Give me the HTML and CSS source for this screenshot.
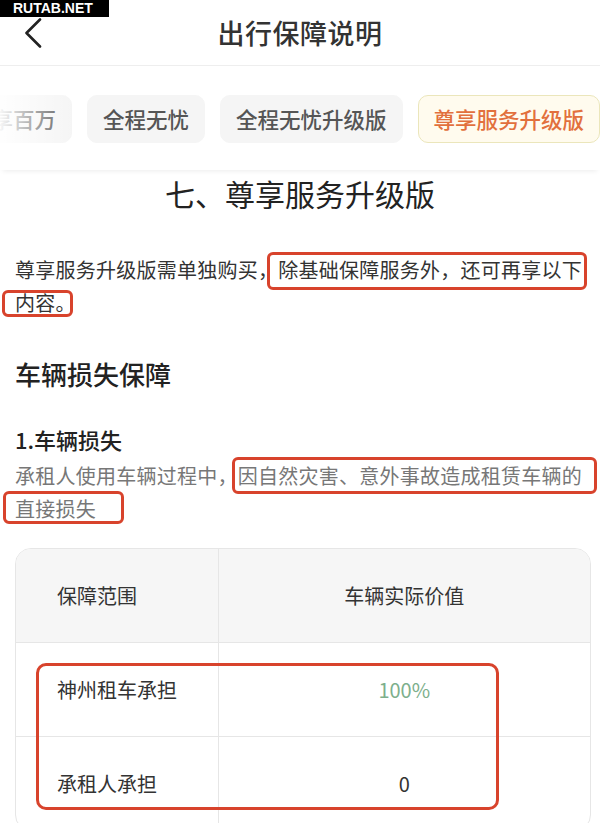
FILE: index.html
```html
<!DOCTYPE html>
<html lang="zh-CN">
<head>
<meta charset="utf-8">
<title>出行保障说明</title>
<link rel="stylesheet" href="styles.css">
</head>
<body>
<div class="watermark">RUTAB.NET</div>
<header class="topbar">
  <div class="back">
    <svg width="20" height="30" viewBox="0 0 20 30"><path d="M18 1.5 L4.5 15 L18 28.5" fill="none" stroke="#222" stroke-width="2.6" stroke-linecap="round" stroke-linejoin="round"/></svg>
  </div>
  <h1 class="title">出行保障说明</h1>
  <div></div>
</header>
<nav class="tabbar">
  <div class="tabs">
    <span class="tab">尊享百万</span>
    <span class="tab">全程无忧</span>
    <span class="tab">全程无忧升级版</span>
    <span class="tab active">尊享服务升级版</span>
  </div>
  <div class="fade"></div>
</nav>
<main class="content">
  <h2 class="section-title">七、尊享服务升级版</h2>
  <p class="intro">尊享服务升级版需单独购买，<span class="mark m1">除基础保障服务外，还可再享以下</span><span class="mark m2">内容。</span></p>
  <h3 class="group-title">车辆损失保障</h3>
  <h4 class="item-title">1.车辆损失</h4>
  <p class="desc">承租人使用车辆过程中，<span class="mark m3">因自然灾害、意外事故造成租赁车辆的</span><span class="mark m4">直接损失</span></p>
  <div class="table-wrap">
    <table class="cover">
      <thead>
        <tr><th class="c1">保障范围</th><th class="c2">车辆实际价值</th></tr>
      </thead>
      <tbody>
        <tr><td class="c1">神州租车承担</td><td class="c2 green">100%</td></tr>
        <tr><td class="c1">承租人承担</td><td class="c2">0</td></tr>
      </tbody>
    </table>
    <div class="table-mark"></div>
  </div>
</main>
</body>
</html>
```
FILE: styles.css
```css
* { box-sizing: border-box; }
html, body { margin: 0; padding: 0; background: #fff; }
body {
  font-family: "Noto Sans CJK SC", "Noto Sans", sans-serif;
  color: #333;
  width: 600px;
  overflow: hidden;
}
.watermark {
  position: absolute;
  left: 0; top: 0;
  width: 109px; height: 17px;
  background: #000;
  color: #fff;
  font-family: "Liberation Sans", Arial, sans-serif;
  font-weight: 700;
  font-size: 14px;
  line-height: 17px;
  padding-left: 13px;
  z-index: 5;
}
.topbar {
  height: 66px;
  border-bottom: 1px solid #eeeeee;
  display: grid;
  grid-template-columns: 1fr auto 1fr;
  align-items: center;
}
.back { padding-left: 22px; display: flex; align-items: center; }
.back svg { display: block; }
.title {
  margin: 0;
  font-size: 27px;
  font-weight: 500;
  color: #333;
  line-height: 36px;
  letter-spacing: 0.5px;
}
.tabbar {
  position: relative;
  height: 104px;
  padding-top: 29px;
  overflow: hidden;
  box-shadow: 0 4px 5px -3px rgba(0,0,0,0.08);
}
.tabs {
  display: flex;
  gap: 15px;
  margin-left: -46px;
  white-space: nowrap;
}
.tab {
  flex: none;
  height: 48px;
  line-height: 46px;
  padding: 0 15px;
  border: 1px solid #f5f5f5;
  border-radius: 10px;
  background: #f5f5f5;
  color: #555;
  font-size: 21.5px;
  font-weight: 500;
}
.tab.active {
  background: #fffbee;
  border: 1.5px solid #ebe6bb;
  color: #e2703d;
}
.fade {
  position: absolute;
  left: 0; top: 0; bottom: 0;
  width: 75px;
  background: linear-gradient(to right, rgba(255,255,255,0.95), rgba(255,255,255,0.5) 45%, rgba(255,255,255,0));
}
.content { padding: 0 15px; }
.section-title {
  margin: 3px 0 0;
  text-align: center;
  font-size: 30px;
  font-weight: 400;
  line-height: 40px;
  color: #222;
}
.intro, .desc {
  margin: 0;
  font-size: 20px;
  line-height: 33px;
  letter-spacing: 0.25px;
}
.intro { margin-top: 40px; color: #333; }
.desc { margin-top: 4px; color: #777; }
.mark { position: relative; }
.mark::after {
  content: "";
  position: absolute;
  border: 3px solid #d8432c;
  border-radius: 6px;
}
.m1::after { top: -3.5px; bottom: -5.5px; left: -11px; right: -5px; }
.m2::after { top: 1.5px; bottom: 0.5px; left: -13px; right: 3px; }
.m3::after { top: -4.5px; bottom: -3.5px; left: -6px; right: -15px; }
.m4::after { top: -3.5px; bottom: -0.5px; left: -12px; right: -28px; }
.group-title {
  margin: 37px 0 0;
  font-size: 26px;
  font-weight: 500;
  line-height: 36px;
  color: #222;
}
.item-title {
  margin: 31px 0 0;
  font-size: 22px;
  font-weight: 500;
  line-height: 32px;
  color: #222;
}
.table-wrap {
  position: relative;
  margin: 23px -6px 0 0;
  border: 1px solid #e6e6e6;
  border-radius: 16px;
}
.cover {
  width: 100%;
  border-collapse: collapse;
  font-size: 20px;
  color: #333;
}
.cover thead tr { background: #f6f6f6; }
.cover th, .cover td {
  font-weight: 400;
  padding: 0;
  height: 93px;
  border-bottom: 1px solid #e6e6e6;
}
.cover thead th:first-child { border-top-left-radius: 15px; }
.cover thead th:last-child { border-top-right-radius: 15px; }
.cover td { height: 94px; }
.cover tbody tr:last-child td { border-bottom: none; }
.cover .c1 {
  width: 202px;
  text-align: left;
  padding-left: 41px;
  border-right: 1px solid #e6e6e6;
}
.cover .c2 { text-align: center; }
.cover .green { color: #7daf8c; }
.table-mark {
  position: absolute;
  left: 20px; top: 114px;
  width: 463px; height: 147px;
  border: 3.5px solid #d8432c;
  border-radius: 10px;
}
```
